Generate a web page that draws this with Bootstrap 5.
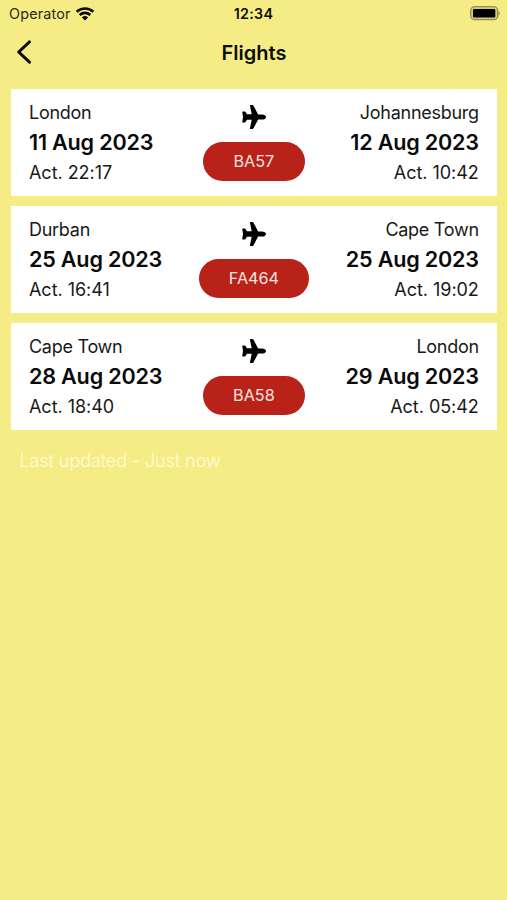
<!DOCTYPE html>
<html lang="en">
<head>
<meta charset="utf-8">
<meta name="viewport" content="width=device-width, initial-scale=1">
<title>Flights</title>
<link href="https://cdn.jsdelivr.net/npm/bootstrap@5.3.0/dist/css/bootstrap.min.css" rel="stylesheet">
<style>
body{background:#f6ec85;font-family:Inter,"Liberation Sans",sans-serif;color:#0c0c0a;min-height:100vh;overflow-x:hidden}
.status-bar{height:28px;font-size:14.3px;line-height:28px}
.status-bar>*,.title-bar>*{width:33.3333%}
.operator{color:#2b2918;letter-spacing:.22px;padding-left:9px}
.operator svg{margin-left:4.5px}
.clock{font-weight:600;letter-spacing:.3px}
.title-bar{height:48px}
.title-bar h1{font-size:20px;font-weight:600;line-height:48px;padding:2px 0 0 1px}
.flights{padding:13px 10px 0 10.6px;gap:10px}
.flight{height:107px;padding:9px 18.2px 0 18.4px}
.place,.actual{font-size:18px;line-height:30px;color:#191919}
.place{letter-spacing:-.27px}
.day{font-size:21.6px;font-weight:600;line-height:29px;color:#0a0a0a;letter-spacing:-.2px}
.actual{line-height:32px;letter-spacing:-.03px}
.flight>div{flex:1 1 0;white-space:nowrap}
.flight>.route{flex:0 0 auto;padding-top:5.5px}
.flight-no{background:#b92219;color:#fbe3df;font-size:16.2px;line-height:39px;height:39px;border-radius:19.5px;padding:0 30.3px;margin-top:12.5px}
.updated{font-size:18px;font-weight:300;color:#fffce0;line-height:30px;padding:16px 19.5px;letter-spacing:-.08px}
</style>
</head>
<body>
<header>
  <div class="status-bar d-flex align-items-center">
    <div class="d-flex align-items-center operator"><span>Operator</span>
      <svg width="20" height="15" viewBox="0 0 20 15" fill="none" stroke="#0c0c0a" stroke-width="2.6"><path d="M1.7 4.8a12 12 0 0 1 16.6 0M4.7 8a7.700 7.700 0 0 1 10.600 0"/><path d="M10 13.600l-3.100-3.200a4.500 4.500 0 0 1 6.200 0z" fill="#0c0c0a" stroke="none"/></svg>
    </div>
    <div class="clock text-center">12:34</div>
    <div class="d-flex justify-content-end pe-1">
      <svg width="33" height="16" viewBox="0 0 33 16"><rect x=".7" y=".7" width="27" height="13" rx="4" fill="#d4cb76" stroke="#96904f" stroke-width="1.3"/><rect x="3" y="3" width="22.3" height="8.5" rx="1.3"/><path d="M28.4 4.9q3 2.3 0 4.6z" fill="#96904f"/></svg>
    </div>
  </div>
  <div class="title-bar d-flex align-items-center">
    <div class="ps-3"><svg class="d-block" width="17" height="26" viewBox="0 0 17 26" fill="none" stroke="#0c0c0a" stroke-width="3" stroke-linecap="round" stroke-linejoin="round"><path d="M13.5 2.900L2.700 13l10.800 10.200"/></svg></div>
    <h1 class="mb-0 text-center">Flights</h1>
    <div></div>
  </div>
</header>
<svg class="d-none"><symbol id="plane" viewBox="0 0 26 26"><path d="M25 13c0 1.600-2 2.600-4 2.600h-3.900L12.700 24q-.5.900-1.400.9H9.600q-.9 0-.6-.9l1.700-8.200H6l-1.500 2.300q-.3.500-.9.500H2q-.8 0-.7-.8L2 13 1.300 8.200q-.1-.8.7-.8h1.600q.6 0 .9.500L6 10.200h4.700L9 2q-.3-.9.600-.9h1.700q.9 0 1.400.9l4.400 8.400H21c2 0 4 1 4 2.600z"/></symbol></svg>
<main class="flights d-flex flex-column">
  <section class="flight bg-white d-flex">
    <div><div class="place">London</div><div class="day">11 Aug 2023</div><div class="actual">Act. 22:17</div></div>
    <div class="route d-flex flex-column align-items-center"><svg width="26" height="26"><use href="#plane"/></svg><div class="flight-no">BA57</div></div>
    <div class="text-end"><div class="place">Johannesburg</div><div class="day">12 Aug 2023</div><div class="actual">Act. 10:42</div></div>
  </section>
  <section class="flight bg-white d-flex">
    <div><div class="place">Durban</div><div class="day">25 Aug 2023</div><div class="actual">Act. 16:41</div></div>
    <div class="route d-flex flex-column align-items-center"><svg width="26" height="26"><use href="#plane"/></svg><div class="flight-no">FA464</div></div>
    <div class="text-end"><div class="place">Cape Town</div><div class="day">25 Aug 2023</div><div class="actual">Act. 19:02</div></div>
  </section>
  <section class="flight bg-white d-flex">
    <div><div class="place">Cape Town</div><div class="day">28 Aug 2023</div><div class="actual">Act. 18:40</div></div>
    <div class="route d-flex flex-column align-items-center"><svg width="26" height="26"><use href="#plane"/></svg><div class="flight-no">BA58</div></div>
    <div class="text-end"><div class="place">London</div><div class="day">29 Aug 2023</div><div class="actual">Act. 05:42</div></div>
  </section>
</main>
<footer class="updated">Last updated - Just now</footer>
<script src="https://cdn.jsdelivr.net/npm/bootstrap@5.3.0/dist/js/bootstrap.bundle.min.js"></script>
</body>
</html>
